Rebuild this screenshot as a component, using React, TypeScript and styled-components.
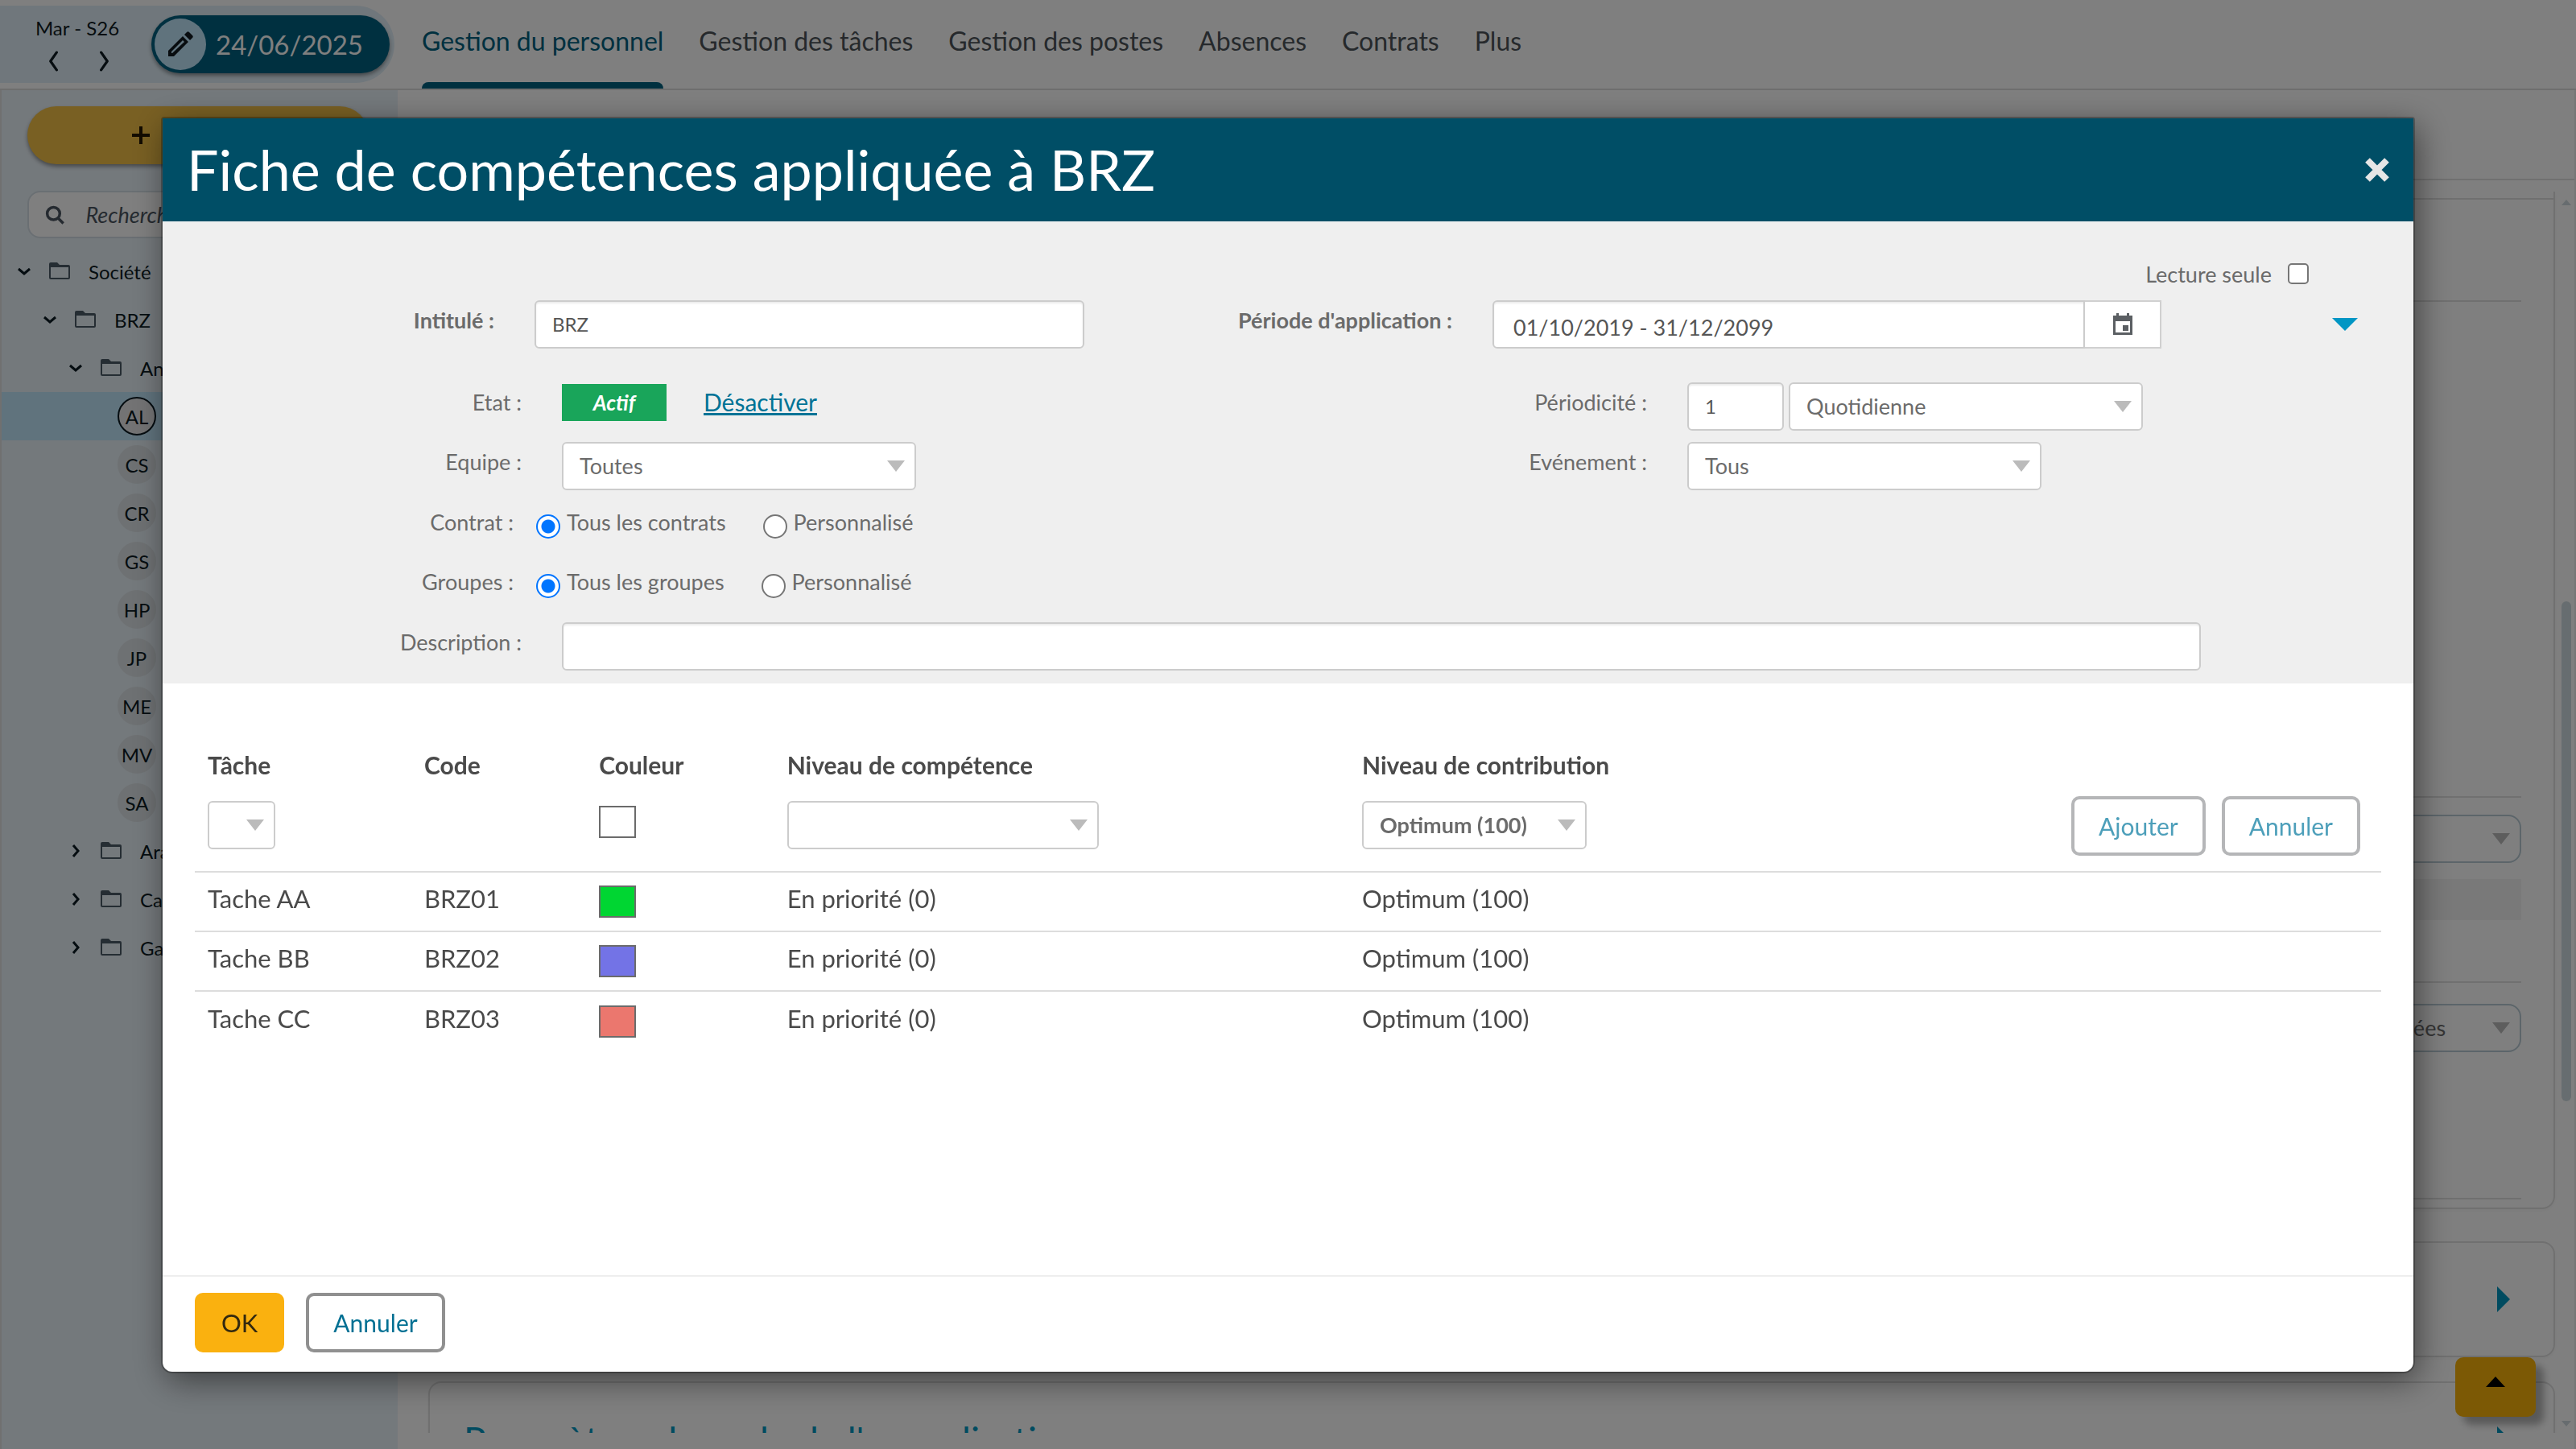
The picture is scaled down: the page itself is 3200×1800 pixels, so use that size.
import React from "react";
import styled, { createGlobalStyle, css } from "styled-components";

const GlobalStyle = createGlobalStyle`
  *, *::before, *::after { box-sizing: border-box; }
  html, body { margin: 0; }
  body, button, input, select {
    font-family: Lato, "Open Sans", sans-serif;
  }
  button { cursor: pointer; }
`;

/* ---------- Page behind the dialog ---------- */

const Page = styled.div`
  height: 100vh;
  display: flex;
  flex-direction: column;
  overflow: hidden;
  background: #fff;
  color: #0e1b22;
`;

const TopBar = styled.header`
  display: flex;
  flex: none;
  height: 112px;
  border-bottom: 2px solid #dcdcdc;
`;

const WeekPanel = styled.div`
  display: flex;
  align-items: center;
  width: 490px;
  height: 96px;
  margin-top: 7px;
  padding-right: 6px;
  border-radius: 0 48px 48px 0;
  background: #e1eff8;
`;

const WeekNav = styled.div`
  display: flex;
  flex-direction: column;
  align-items: center;
  width: 188px;
  gap: 14px;
  padding-left: 4px;
  font-size: 24px;
  line-height: 28px;
`;

const WeekArrows = styled.div`
  display: flex;
  gap: 38px;
  padding-left: 4px;
`;

const IconButton = styled.button`
  display: flex;
  padding: 0;
  border: 0;
  background: none;
  color: inherit;
`;

const DatePill = styled.button`
  display: flex;
  flex: 1;
  align-items: center;
  gap: 12px;
  height: 72px;
  padding: 4px;
  border: 0;
  border-radius: 36px;
  background: #006180;
  box-shadow: 0 3px 5px rgba(0, 0, 0, 0.4);
  color: #fff;
  font-size: 33px;
`;

const PencilDisc = styled.span`
  display: flex;
  align-items: center;
  justify-content: center;
  width: 64px;
  height: 64px;
  border-radius: 50%;
  background: #c0e6fb;
  color: #10191e;
`;

const Tabs = styled.nav`
  display: flex;
  gap: 44px;
  padding-left: 34px;
`;

const Tab = styled.a<{ $active?: boolean }>`
  display: flex;
  flex-direction: column;
  justify-content: space-between;
  padding-top: 30px;
  color: ${(p) => (p.$active ? "#00607f" : "#4c5358")};
  font-size: 32px;
  line-height: 42px;
  text-decoration: none;
  white-space: nowrap;
  &::after {
    content: "";
    height: 8px;
    border-radius: 8px 8px 0 0;
    background: ${(p) => (p.$active ? "#00607f" : "transparent")};
  }
`;

const Workspace = styled.div`
  display: flex;
  flex: 1;
  min-height: 0;
`;

const Sidebar = styled.aside`
  flex: none;
  width: 494px;
  border-left: 2px solid #e0e0e0;
  background: #e9f2f8;
`;

const SidebarTools = styled.div`
  display: flex;
  flex-direction: column;
  gap: 33px;
  padding: 20px 36px 11px 32px;
`;

const AddButton = styled.button`
  height: 72px;
  padding: 0 0 0 129px;
  border: 0;
  border-radius: 36px;
  background: #f2c047;
  box-shadow: 0 3px 5px rgba(0, 0, 0, 0.4);
  color: #251800;
  text-align: left;
  line-height: 0;
`;

const SearchBox = styled.label`
  display: flex;
  align-items: center;
  gap: 24px;
  height: 59px;
  padding: 0 20px;
  border: 2px solid #d5dfe6;
  border-radius: 16px;
  background: #fff;
  color: #4a5560;
`;

const SearchInput = styled.input`
  width: 100%;
  border: 0;
  outline: 0;
  background: none;
  font-size: 27px;
  font-style: italic;
  &::placeholder { color: #4a5560; }
`;

const Tree = styled.ul`
  margin: 0;
  padding: 0;
  list-style: none;
`;

const TreeRow = styled.li<{ $depth: number; $selected?: boolean }>`
  display: flex;
  align-items: center;
  height: 60px;
  padding-left: ${(p) => 16 + p.$depth * 32}px;
  background: ${(p) => (p.$selected ? "#c0e6fb" : "transparent")};
  font-size: 24px;
  color: #0b1a22;
  svg + svg { margin: 0 22px 0 18px; color: #4a5a66; }
`;

const Avatar = styled.span<{ $selected?: boolean }>`
  display: flex;
  align-items: center;
  justify-content: center;
  width: 48px;
  height: 48px;
  border: 2px solid ${(p) => (p.$selected ? "#0b1a22" : "#dde3e7")};
  border-radius: 50%;
  background: ${(p) => (p.$selected ? "#e6e6e8" : "#dde3e7")};
`;

const Main = styled.main`
  display: flex;
  flex: 1;
  flex-direction: column;
  min-width: 0;
  padding-bottom: 20px;
  border-right: 2px solid #ededed;
`;

const SubBar = styled.div`
  flex: none;
  height: 112px;
  border-bottom: 2px solid #e0e0e0;
`;

const ScrollRegion = styled.div`
  display: flex;
  flex: 1;
  min-height: 0;
  margin-top: 14px;
`;

const Cards = styled.div`
  flex: 1;
  overflow: hidden;
  padding: 0 4px 0 38px;
`;

const Card = styled.section<{ $first?: boolean }>`
  display: flex;
  flex-direction: column;
  margin-bottom: ${(p) => (p.$first ? 40 : 30)}px;
  padding: 0 40px;
  border: 2px solid #e0e0e0;
  border-top-width: ${(p) => (p.$first ? 0 : 2)}px;
  border-radius: ${(p) => (p.$first ? "0 0 16px 16px" : "16px")};
  box-shadow: 0 2px 4px rgba(0, 0, 0, 0.04);
`;

const CardTop = styled.div`
  height: 10px;
  margin: 0 -40px;
  border-bottom: 2px solid #e0e0e0;
`;

const CardEnd = styled.div`
  height: 10px;
`;

const Divider = styled.div<{ $space: number }>`
  height: ${(p) => p.$space}px;
  border-bottom: 2px solid #e0e0e0;
`;

const Band = styled.div`
  height: 51px;
  margin: 20px 0 22px;
  background: #f3f3f3;
`;

const RightAligned = styled.div<{ $space: number }>`
  display: flex;
  justify-content: flex-end;
  padding-top: ${(p) => p.$space}px;
`;

const CardTitle = styled.h2`
  display: flex;
  align-items: center;
  justify-content: space-between;
  height: 140px;
  margin: 0;
  padding: 0 14px 0 2px;
  color: #0096c0;
  font-size: 46px;
  font-weight: 400;
`;

const ScrollBar = styled.div`
  display: flex;
  flex: none;
  flex-direction: column;
  align-items: center;
  width: 20px;
  padding: 10px 0 8px;
  color: #ced9de;
`;

const ScrollThumb = styled.div`
  width: 12px;
  margin: 492px 0 auto;
  height: 621px;
  border-radius: 6px;
  background: #cfdbe0;
`;

const ToTop = styled.button`
  position: fixed;
  right: 50px;
  bottom: 40px;
  width: 100px;
  height: 74px;
  border: 0;
  border-radius: 10px;
  background: #f9b20a;
  box-shadow: 10px 10px 10px rgba(0, 0, 0, 0.3);
  padding: 0 0 10px;
  color: #000;
`;

/* ---------- Dialog ---------- */

const Overlay = styled.div`
  position: fixed;
  inset: 0;
  display: flex;
  padding: 147px 202px 96px;
  background: rgba(0, 0, 0, 0.5);
`;

const Dialog = styled.section`
  display: flex;
  flex: 1;
  flex-direction: column;
  min-width: 0;
  border-radius: 2px 2px 12px 12px;
  background: #fff;
  box-shadow: 0 0 0 2px rgba(0, 0, 0, 0.25), 5px 10px 40px rgba(0, 0, 0, 0.5);
  color: #4a4a4a;
`;

const DialogHeader = styled.header`
  display: flex;
  flex: none;
  align-items: center;
  justify-content: space-between;
  height: 128px;
  padding: 0 30px;
  background: #004e66;
  color: #fff;
`;

const DialogTitle = styled.h1`
  margin: 0;
  padding-bottom: 2px;
  font-size: 70px;
  font-weight: 400;
  line-height: 88px;
`;

const Form = styled.form`
  display: flex;
  flex: none;
  flex-direction: column;
  gap: 14px;
  padding: 52px 0 16px;
  background: #efefef;
  color: #6b6b6b;
  font-size: 27px;
`;

const ReadOnlyRow = styled.label`
  display: flex;
  align-items: center;
  justify-content: flex-end;
  gap: 20px;
  height: 26px;
  margin-bottom: 6px;
  padding-right: 130px;
`;

const Checkbox = styled.input`
  width: 26px;
  height: 26px;
  margin: 0;
  border: 2px solid #767676;
  border-radius: 5px;
  background: #fff;
  appearance: none;
`;

const FormRow = styled.div<{ $kind: "head" | "pair" | "radio" | "wide" }>`
  display: grid;
  align-items: center;
  height: 60px;
  grid-template-columns: ${(p) =>
    ({
      head: "462fr 683fr 507fr 831fr 313fr",
      pair: "496fr 902fr 496fr 902fr",
      radio: "462fr 2334fr",
      wide: "496fr 2036fr 264fr",
    })[p.$kind]};
  ${(p) => p.$kind === "head" && "margin-bottom: 28px;"}
  ${(p) => p.$kind === "wide" && "margin-top: 2px;"}
`;

const Label = styled.label<{ $strong?: boolean; $near?: boolean }>`
  padding: 0 ${(p) => (p.$near ? "26px 10px" : "50px 12px")} 0;
  font-weight: ${(p) => (p.$strong ? 700 : 400)};
  text-align: right;
`;

const Controls = styled.div<{ $gap?: number }>`
  display: flex;
  align-items: center;
  gap: ${(p) => p.$gap ?? 0}px;
`;

const field = css`
  height: 60px;
  border: 2px solid #ccc;
  border-radius: 6px;
  background: #fff;
  color: #555;
`;

const TextInput = styled.input<{ $short?: boolean; $large?: boolean }>`
  ${field}
  width: ${(p) => (p.$short ? "120px" : "100%")};
  padding: 0 20px 2px;
  box-shadow: inset 0 2px 2px rgba(0, 0, 0, 0.08);
  font-size: ${(p) => (p.$large ? 27 : 24)}px;
  ${(p) => p.$large && "padding: 6px 24px 0; border-radius: 6px 0 0 6px;"}
`;

const CalendarButton = styled.button`
  display: flex;
  flex: none;
  align-items: center;
  justify-content: center;
  width: 95px;
  height: 60px;
  border: 2px solid #d0d0d0;
  border-left: 0;
  background: #fff;
  color: #5b5f63;
`;

const CollapseButton = styled(IconButton)`
  justify-self: center;
  margin-left: 142px;
  color: #0096c4;
`;

const SelectFrame = styled.span<{ $width: number }>`
  position: relative;
  display: inline-block;
  width: ${(p) => p.$width}px;
  vertical-align: top;
  &::after {
    content: "";
    position: absolute;
    top: 23px;
    right: 14px;
    border: 11px solid transparent;
    border-top: 14px solid #bbb;
    border-bottom: 0;
    pointer-events: none;
  }
`;

const SelectBox = styled.select<{ $strong?: boolean }>`
  ${field}
  width: 100%;
  padding: 0 40px 2px 20px;
  color: #6b6b6b;
  font-size: 27px;
  font-weight: ${(p) => (p.$strong ? 700 : 400)};
  appearance: none;
`;

const PageSelect = styled(SelectBox)`
  border-color: #b9cbd5;
  border-radius: 16px;
`;

const StateBadge = styled.span`
  width: 130px;
  height: 46px;
  margin-bottom: 10px;
  background: #19a55a;
  color: #fff;
  font-size: 26px;
  font-style: italic;
  font-weight: 700;
  line-height: 46px;
  text-align: center;
`;

const StateLink = styled.a`
  padding-bottom: 12px;
  color: #007396;
  font-size: 30px;
  text-decoration: underline;
  text-decoration-thickness: 3px;
`;

const RadioLabel = styled.label`
  display: flex;
  align-items: center;
  gap: 8px;
  span { padding-bottom: 10px; }
`;

const Radio = styled.input`
  width: 30px;
  height: 30px;
  margin: 2px 0 0 2px;
  border: 2px solid #767676;
  border-radius: 50%;
  background: #fff;
  appearance: none;
  &:checked {
    border-color: #0075ff;
    background: radial-gradient(#0075ff 0 8px, #fff 9px);
  }
`;

const DialogBody = styled.div`
  flex: 1;
  padding: 64px 40px 0;
`;

const SkillTable = styled.table`
  width: 100%;
  border-collapse: collapse;
  table-layout: fixed;
  font-size: 31px;
  th, td {
    padding: 0 0 0 16px;
    text-align: left;
  }
  th {
    height: 74px;
    font-size: 30px;
  }
  tbody td {
    height: 74px;
    padding-bottom: 8px;
    border-top: 2px solid #ddd;
  }
  tbody tr:first-child td {
    height: 96px;
    padding-bottom: 4px;
    border-top: 0;
    vertical-align: top;
  }
`;

const Swatch = styled.span<{ $color: string; $entry?: boolean }>`
  display: block;
  width: 46px;
  height: 40px;
  margin-top: ${(p) => (p.$entry ? 14 : 8)}px;
  border: 2px solid #6b6b6b;
  background: ${(p) => p.$color};
`;

const EntryField = styled.div`
  padding-top: 8px;
`;

const EntryActions = styled.div`
  display: flex;
  justify-content: flex-end;
  gap: 20px;
  padding: 2px 26px 0 0;
`;

const OutlineButton = styled.button<{ $muted?: boolean }>`
  height: 74px;
  padding: 0 30px;
  border: 4px solid ${(p) => (p.$muted ? "#b5b6b8" : "#909090")};
  border-radius: 10px;
  background: #fff;
  color: ${(p) => (p.$muted ? "#4d9fba" : "#007093")};
  font-size: 30px;
`;

const OkButton = styled.button`
  height: 74px;
  padding: 0 33px;
  border: 0;
  border-radius: 10px;
  background: #fab10f;
  color: #33290f;
  font-size: 31px;
`;

const DialogFooter = styled.footer`
  display: flex;
  flex: none;
  gap: 27px;
  height: 120px;
  padding: 20px 40px 0;
  border-top: 2px solid #eee;
`;

/* ---------- Icons ---------- */

type Direction = "left" | "right";

const chevrons: Record<Direction, string> = {
  left: "M16 2 9 12l7 10",
  right: "M8 2l7 10-7 10",
};

const Chevron = ({ to }: { to: Direction }) => (
  <svg width="26" height="26" viewBox="0 0 24 24" fill="none" stroke="currentColor" strokeWidth="3" aria-hidden>
    <path d={chevrons[to]} strokeLinecap="round" strokeLinejoin="round" />
  </svg>
);

const TreeChevron = ({ open }: { open: boolean }) => (
  <svg width="24" height="24" viewBox="0 0 24 24" fill="none" stroke="currentColor" strokeWidth="3" aria-hidden>
    <path d={open ? "M5 9l7 6 7-6" : "M9 5l6 7-6 7"} />
  </svg>
);

const Folder = () => (
  <svg width="28" height="24" viewBox="0 0 28 24" aria-hidden>
    <path
      fill="currentColor"
      fillRule="evenodd"
      d="M3 1h8l3 3h11a2 2 0 0 1 2 2v14a2 2 0 0 1-2 2H3a2 2 0 0 1-2-2V3a2 2 0 0 1 2-2zm0 6v13h22V7z"
    />
  </svg>
);

const Triangle = ({ points, width, height }: { points: string; width: number; height: number }) => (
  <svg width={width} height={height} aria-hidden>
    <polygon points={points} fill="currentColor" />
  </svg>
);

const Pencil = () => (
  <svg width="34" height="34" viewBox="0 0 34 34" aria-hidden>
    <path
      fill="currentColor"
      fillRule="evenodd"
      d="M2 25 20 7l7 7L9 32H2zM6 26v2h1L22 14l-2-2z"
    />
    <path d="m22 5 3-3c1-1 2-1 3 0l4 4c1 1 1 2 0 3l-3 3z" fill="currentColor" />
  </svg>
);

/* ---------- Data ---------- */

const tabs = ["Gestion du personnel", "Gestion des tâches", "Gestion des postes", "Absences", "Contrats", "Plus"];

const people = ["AL", "CS", "CR", "GS", "HP", "JP", "ME", "MV", "SA"];

const skills = [
  { task: "Tache AA", code: "BRZ01", color: "#00d632" },
  { task: "Tache BB", code: "BRZ02", color: "#7373e6" },
  { task: "Tache CC", code: "BRZ03", color: "#eb776e" },
];

const Select = ({
  label,
  value,
  width,
  id,
  strong,
}: {
  label?: string;
  value: string;
  width: number;
  id?: string;
  strong?: boolean;
}) => (
  <SelectFrame $width={width}>
    <SelectBox id={id} aria-label={label} $strong={strong} defaultValue={value}>
      <option value={value}>{value}</option>
    </SelectBox>
  </SelectFrame>
);

const FolderRow = ({ depth, name, open }: { depth: number; name: string; open: boolean }) => (
  <TreeRow $depth={depth}>
    <TreeChevron open={open} />
    <Folder />
    {name}
  </TreeRow>
);

const RadioRow = ({ title, name, all }: { title: string; name: string; all: string }) => (
  <FormRow $kind="radio" role="radiogroup" aria-labelledby={`${name}-title`}>
    <Label as="span" id={`${name}-title`} $near>
      {title}
    </Label>
    <Controls $gap={44}>
      <RadioLabel>
        <Radio type="radio" name={name} defaultChecked />
        <span>{all}</span>
      </RadioLabel>
      <RadioLabel>
        <Radio type="radio" name={name} />
        <span>Personnalisé</span>
      </RadioLabel>
    </Controls>
  </FormRow>
);

const BackgroundPage = () => (
  <Page>
    <TopBar>
      <WeekPanel>
        <WeekNav>
          Mar - S26
          <WeekArrows>
            <IconButton aria-label="Semaine précédente">
              <Chevron to="left" />
            </IconButton>
            <IconButton aria-label="Semaine suivante">
              <Chevron to="right" />
            </IconButton>
          </WeekArrows>
        </WeekNav>
        <DatePill>
          <PencilDisc>
            <Pencil />
          </PencilDisc>
          24/06/2025
        </DatePill>
      </WeekPanel>
      <Tabs>
        {tabs.map((name, i) => (
          <Tab key={name} href="#" $active={i === 0}>
            {name}
          </Tab>
        ))}
      </Tabs>
    </TopBar>
    <Workspace>
      <Sidebar>
        <SidebarTools>
          <AddButton aria-label="Ajouter">
            <svg width="24" height="24" viewBox="0 0 24 24" stroke="currentColor" strokeWidth="4" aria-hidden>
              <path d="M12 1v22M1 12h22" />
            </svg>
          </AddButton>
          <SearchBox>
            <svg width="28" height="28" viewBox="0 0 28 28" fill="none" stroke="currentColor" strokeWidth="4" aria-hidden>
              <circle cx="12" cy="12" r="9" />
              <path d="m18 18 8 8" />
            </svg>
            <SearchInput placeholder="Recherche" aria-label="Recherche" />
          </SearchBox>
        </SidebarTools>
        <Tree>
          <FolderRow depth={0} name="Société" open />
          <FolderRow depth={1} name="BRZ" open />
          <FolderRow depth={2} name="An" open />
          {people.map((initials, i) => (
            <TreeRow key={initials} $depth={4} $selected={i === 0}>
              <Avatar $selected={i === 0}>{initials}</Avatar>
            </TreeRow>
          ))}
          <FolderRow depth={2} name="Ara" open={false} />
          <FolderRow depth={2} name="Cat" open={false} />
          <FolderRow depth={2} name="Ga" open={false} />
        </Tree>
      </Sidebar>
      <Main>
        <SubBar />
        <ScrollRegion>
          <Cards>
            <Card $first>
              <CardTop />
              <Divider $space={127} />
              <Divider $space={616} />
              <RightAligned $space={21}>
                <SelectFrame $width={323}>
                  <PageSelect aria-label="Mode" />
                </SelectFrame>
              </RightAligned>
              <Band />
              <Divider $space={56} />
              <RightAligned $space={26}>
                <SelectFrame $width={323}>
                  <PageSelect aria-label="Tâches" defaultValue="a">
                    <option value="a">Toutes autorisées</option>
                  </PageSelect>
                </SelectFrame>
              </RightAligned>
              <Divider $space={183} />
              <CardEnd />
            </Card>
            <Card>
              <CardTitle>
                <span />
                <Triangle width={16} height={32} points="0,0 16,16 0,32" />
              </CardTitle>
            </Card>
            <Card>
              <CardTitle>
                Paramètres de cycle de l'annualisation
                <Triangle width={16} height={32} points="0,0 16,16 0,32" />
              </CardTitle>
            </Card>
          </Cards>
          <ScrollBar>
            <Triangle width={12} height={7} points="6,0 12,7 0,7" />
            <ScrollThumb />
            <Triangle width={12} height={7} points="0,0 12,0 6,7" />
          </ScrollBar>
        </ScrollRegion>
      </Main>
    </Workspace>
    <ToTop aria-label="Haut de page">
      <Triangle width={24} height={14} points="12,0 24,13 0,13" />
    </ToTop>
  </Page>
);

const SkillDialog = () => (
  <Dialog role="dialog" aria-labelledby="dialog-title">
    <DialogHeader>
      <DialogTitle id="dialog-title">Fiche de compétences appliquée à BRZ</DialogTitle>
      <IconButton aria-label="Fermer">
        <svg width="30" height="30" viewBox="0 0 30 30" stroke="#e6e6e6" strokeWidth="8" aria-hidden>
          <path d="m3 3 24 24M27 3 3 27" />
        </svg>
      </IconButton>
    </DialogHeader>
    <Form>
      <ReadOnlyRow>
        Lecture seule
        <Checkbox type="checkbox" />
      </ReadOnlyRow>
      <FormRow $kind="head">
        <Label htmlFor="title" $strong>
          Intitulé :
        </Label>
        <TextInput id="title" defaultValue="BRZ" />
        <Label htmlFor="period" $strong>
          Période d'application :
        </Label>
        <Controls>
          <TextInput id="period" $large defaultValue="01/10/2019 - 31/12/2099" />
          <CalendarButton type="button" aria-label="Calendrier">
            <svg width="26" height="28" viewBox="0 0 26 28" fill="currentColor" aria-hidden>
              <path fillRule="evenodd" d="M5 0h3v3h10V0h3v3h4v24H1V3h4zM4 10v14h18V10z" />
              <path d="M13 15h7v7h-7z" />
            </svg>
          </CalendarButton>
        </Controls>
        <CollapseButton type="button" aria-label="Replier">
          <Triangle width={32} height={16} points="0,0 32,0 16,16" />
        </CollapseButton>
      </FormRow>
      <FormRow $kind="pair">
        <Label as="span">Etat :</Label>
        <Controls $gap={46}>
          <StateBadge>Actif</StateBadge>
          <StateLink href="#">Désactiver</StateLink>
        </Controls>
        <Label htmlFor="every">Périodicité :</Label>
        <Controls $gap={6}>
          <TextInput id="every" $short defaultValue="1" />
          <Select label="Unité" value="Quotidienne" width={440} />
        </Controls>
      </FormRow>
      <FormRow $kind="pair">
        <Label htmlFor="team">Equipe :</Label>
        <Select id="team" value="Toutes" width={440} />
        <Label htmlFor="event">Evénement :</Label>
        <Select id="event" value="Tous" width={440} />
      </FormRow>
      <RadioRow title="Contrat :" name="contract" all="Tous les contrats" />
      <RadioRow title="Groupes :" name="group" all="Tous les groupes" />
      <FormRow $kind="wide">
        <Label htmlFor="description">Description :</Label>
        <TextInput id="description" />
      </FormRow>
    </Form>
    <DialogBody>
      <SkillTable>
        <colgroup>
          <col style={{ width: "9.9%" }} />
          <col style={{ width: "8%" }} />
          <col style={{ width: "8.6%" }} />
          <col style={{ width: "26.3%" }} />
          <col style={{ width: "23%" }} />
          <col />
        </colgroup>
        <thead>
          <tr>
            <th>Tâche</th>
            <th>Code</th>
            <th>Couleur</th>
            <th>Niveau de compétence</th>
            <th>Niveau de contribution</th>
            <th aria-label="Actions" />
          </tr>
        </thead>
        <tbody>
          <tr>
            <td>
              <EntryField>
                <Select label="Tâche" value="" width={84} />
              </EntryField>
            </td>
            <td />
            <td>
              <Swatch $color="#fff" $entry />
            </td>
            <td>
              <EntryField>
                <Select label="Niveau de compétence" value="" width={387} />
              </EntryField>
            </td>
            <td>
              <EntryField>
                <Select label="Niveau de contribution" value="Optimum (100)" width={279} strong />
              </EntryField>
            </td>
            <td>
              <EntryActions>
                <OutlineButton $muted>Ajouter</OutlineButton>
                <OutlineButton $muted>Annuler</OutlineButton>
              </EntryActions>
            </td>
          </tr>
          {skills.map((s) => (
            <tr key={s.code}>
              <td>{s.task}</td>
              <td>{s.code}</td>
              <td>
                <Swatch $color={s.color} />
              </td>
              <td>En priorité (0)</td>
              <td>Optimum (100)</td>
              <td />
            </tr>
          ))}
        </tbody>
      </SkillTable>
    </DialogBody>
    <DialogFooter>
      <OkButton>OK</OkButton>
      <OutlineButton>Annuler</OutlineButton>
    </DialogFooter>
  </Dialog>
);

export default function App() {
  return (
    <>
      <GlobalStyle />
      <BackgroundPage />
      <Overlay>
        <SkillDialog />
      </Overlay>
    </>
  );
}
